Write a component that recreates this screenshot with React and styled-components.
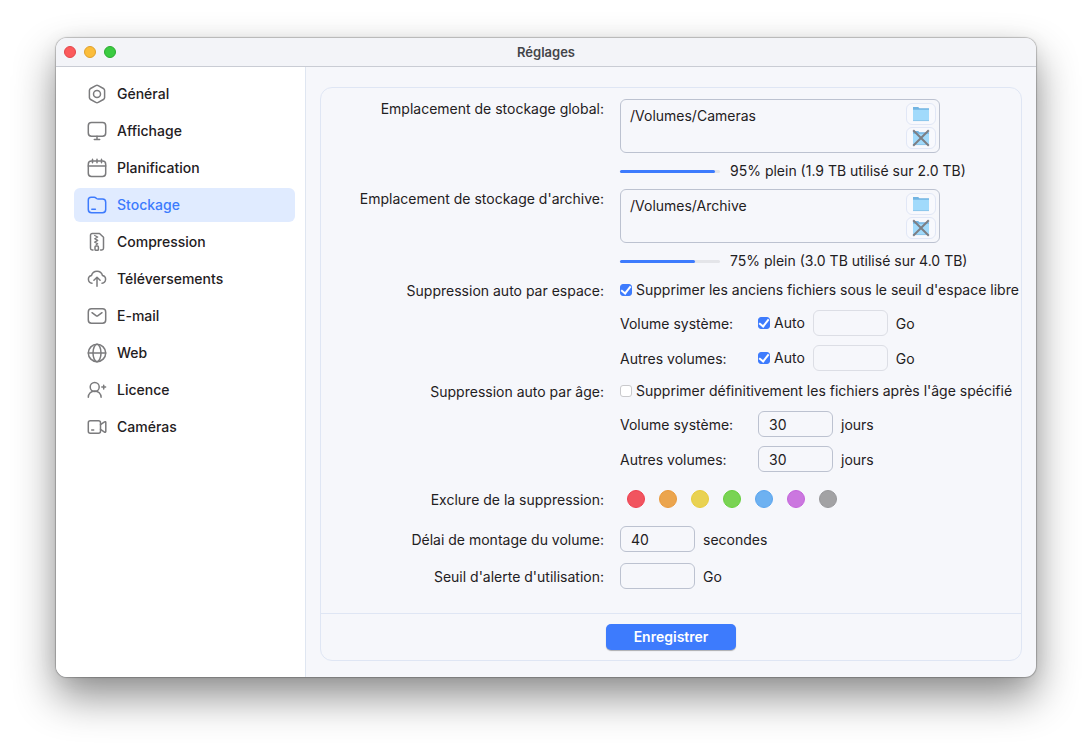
import React, { useState } from 'react';
import styled, { createGlobalStyle } from 'styled-components';

const GlobalStyle = createGlobalStyle`
  * {
    box-sizing: border-box;
  }

  body {
    margin: 0;
    background-color: #ffffff;
    color: #1f2022;
    font-family: Inter, 'Liberation Sans', sans-serif;
    font-size: 14px;
  }

  button, input, textarea {
    margin: 0;
    font: inherit;
    color: inherit;
  }
`;

const Desktop = styled.div`
  display: flex;
  min-height: 100vh;
  padding: 38px 56px 74px;
`;

const Window = styled.div`
  flex: 1;
  display: flex;
  flex-direction: column;
  overflow: hidden;
  border-radius: 11px;
  background-color: #f6f7fb;
  box-shadow: 0 0 1px 1px rgba(0, 0, 0, 0.22), 0 20px 42px rgba(0, 0, 0, 0.44),
    0 2px 20px rgba(0, 0, 0, 0.06);
`;

const TitleBar = styled.header`
  display: grid;
  grid-template-columns: 1fr auto 1fr;
  align-items: center;
  height: 29px;
  padding: 0 8px;
  border-bottom: 1px solid #c9ccd4;
  background-color: #f3f4f8;
`;

const WindowButtons = styled.div`
  display: flex;
  gap: 8px;
`;

const WindowButton = styled.button`
  width: 12px;
  height: 12px;
  padding: 0;
  border: 1px solid ${props => props.$edge};
  border-radius: 50%;
  background-color: ${props => props.$fill};
`;

const Title = styled.h1`
  margin: 0;
  color: #434449;
  font-size: 13px;
  font-weight: 600;
`;

const Body = styled.div`
  flex: 1;
  display: flex;
`;

const Sidebar = styled.nav`
  flex: 0 0 250px;
  display: flex;
  flex-direction: column;
  gap: 3px;
  padding: 10px 10px 10px 18px;
  border-right: 1px solid #dfe6f1;
  background-color: #ffffff;
`;

const NavItem = styled.a`
  display: flex;
  align-items: center;
  gap: 10px;
  height: 34px;
  padding: 0 13px;
  border-radius: 6px;
  color: ${props => (props.$active ? '#3d7bfd' : '#1f2022')};
  background-color: ${props => (props.$active ? '#e0ebff' : 'transparent')};
  font-weight: 500;
  line-height: 20px;
  text-decoration: none;

  svg {
    width: 20px;
    height: 20px;
    color: ${props => (props.$active ? '#3d7bfd' : '#7b7b7d')};
  }
`;

const Content = styled.main`
  flex: 1;
  display: flex;
  padding: 20px 14px 16px;
`;

const Panel = styled.form`
  flex: 1;
  display: flex;
  flex-direction: column;
  border: 1px solid #dfe6f4;
  border-radius: 12px;
`;

const Fields = styled.div`
  flex: 1;
  display: flex;
  flex-direction: column;
  gap: 9px;
  padding: 11px 0 23px;
`;

const FieldName = styled.label`
  line-height: ${props => (props.$tight ? 20 : 24)}px;
  text-align: right;
  white-space: nowrap;
`;

const FieldRow = styled.div`
  display: grid;
  grid-template-columns: 283px 1fr;
  column-gap: 16px;
  align-items: ${props => (props.$centered ? 'center' : 'start')};
  min-height: ${props => props.$height || 28}px;

  > ${FieldName} {
    padding-top: ${props => (props.$centered ? 2 : 0)}px;
  }
`;

const PathBox = styled.div`
  display: flex;
  width: 320px;
  height: 54px;
  padding: 3px;
  border: 1px solid #bcc2d0;
  border-radius: 6px;
`;

const PathText = styled.textarea`
  flex: 1;
  padding: 3px 6px;
  border: none;
  outline: none;
  background: none;
  line-height: 20px;
  resize: none;
`;

const PathButtons = styled.div`
  display: flex;
  flex-direction: column;
  gap: 2px;
`;

const PathButton = styled.button`
  display: flex;
  align-items: center;
  justify-content: center;
  width: 30px;
  height: 22px;
  padding: 0;
  border: 1px solid #e1e7f6;
  border-radius: 6px;
  background-color: #f8f9fd;
`;

const Usage = styled.div`
  display: flex;
  align-items: center;
  gap: 10px;
  margin-top: 9px;
  line-height: 18px;
  white-space: nowrap;
`;

const UsageTrack = styled.div`
  width: 100px;
  height: 3px;
  border-radius: 2px;
  background-color: #e4e5e9;
`;

const UsageFill = styled.div`
  height: 100%;
  border-radius: 2px;
  background-color: #3d7bfd;
`;

const CheckLabel = styled.label`
  display: flex;
  align-items: center;
  gap: 4px;
  line-height: 22px;
  white-space: nowrap;
`;

const CheckBox = styled.input.attrs({ type: 'checkbox' })`
  appearance: none;
  display: grid;
  place-items: center;
  width: 12px;
  height: 12px;
  border: 1px solid #c9c9cc;
  border-radius: 3px;
  background-color: #ffffff;

  &:checked {
    border-color: #3d7bfd;
    background-color: #3d7bfd;
  }

  &:checked::after {
    content: '';
    width: 4px;
    height: 8px;
    margin-top: -2px;
    border: solid #ffffff;
    border-width: 0 2px 2px 0;
    transform: rotate(38deg);
  }
`;

const SubRow = styled.div`
  display: flex;
  align-items: center;
  gap: 8px;
  height: 26px;
  margin-top: 9px;
`;

const SubName = styled.label`
  width: 130px;
`;

const InlineField = styled.div`
  display: flex;
  align-items: center;
  gap: 8px;
`;

const NumberInput = styled.input`
  width: 75px;
  height: 26px;
  padding: 0 10px;
  border: 1px solid #bcc2d0;
  border-radius: 6px;
  outline: none;
  background: none;

  &:disabled {
    border-color: #dcdee5;
  }
`;

const Tags = styled.div`
  display: flex;
  gap: 14px;
  padding-left: 7px;
`;

const Tag = styled.input.attrs({ type: 'checkbox' })`
  appearance: none;
  width: 18px;
  height: 18px;
  border: 1px solid ${props => props.$edge};
  border-radius: 50%;
  background-color: ${props => props.$fill};
`;

const Footer = styled.footer`
  display: flex;
  justify-content: center;
  padding: 10px;
  border-top: 1px solid #dfe6f4;
`;

const SaveButton = styled.button`
  width: 130px;
  height: 26px;
  padding: 0;
  border: none;
  border-radius: 5px;
  background-color: #3d7bfd;
  box-shadow: 0 1px 1px rgba(0, 0, 0, 0.3);
  color: #ffffff;
  font-weight: 600;
  line-height: 20px;
`;

const Icon = ({ children }) => (
  <svg
    viewBox="0 0 20 20"
    fill="none"
    stroke="currentColor"
    strokeWidth="1.5"
    strokeLinecap="round"
    strokeLinejoin="round"
    aria-hidden="true"
  >
    {children}
  </svg>
);

const FolderPicture = ({ crossed }) => (
  <svg width="18" height="18" viewBox="0 0 18 18" aria-hidden="true">
    <path d="M1 2h5.2l1.2 1.3H17V8H1z" fill="#72b4e2" />
    <path d="M1 4.8h16V16H1z" fill="#a1dafb" />
    <path d="M1 15.6h16" stroke="#86c0e6" strokeWidth="0.8" />
    {crossed && <path d="M1.2 1.2l15.6 15.6M16.8 1.2L1.2 16.8" stroke="#7d7f84" strokeWidth="2" />}
  </svg>
);

const navItems = [
  {
    id: 'general',
    label: 'Général',
    icon: (
      <>
        <path d="M8.8 1.6a2.4 2.4 0 0 1 2.4 0l5.2 2.9a2.4 2.4 0 0 1 1.2 2.1v6.8a2.4 2.4 0 0 1-1.2 2.1l-5.2 2.9a2.4 2.4 0 0 1-2.4 0l-5.2-2.9a2.4 2.4 0 0 1-1.2-2.1V6.6a2.4 2.4 0 0 1 1.2-2.1z" />
        <circle cx="10" cy="10" r="3.5" />
      </>
    ),
  },
  {
    id: 'display',
    label: 'Affichage',
    icon: (
      <>
        <rect x="1.3" y="1.5" width="17.4" height="13.7" rx="3.2" />
        <path d="M10 15.2v3M7.3 18.4h5.4" />
      </>
    ),
  },
  {
    id: 'schedule',
    label: 'Planification',
    icon: (
      <>
        <rect x="1.3" y="3" width="17.4" height="15.5" rx="3.2" />
        <path d="M1.3 8h17.4M5.5 1.3v3.4M10 1.3v3.4M14.5 1.3v3.4" />
      </>
    ),
  },
  {
    id: 'storage',
    label: 'Stockage',
    icon: (
      <>
        <path d="M1.3 5a2.8 2.8 0 0 1 2.8-2.8h3.1c.8 0 1.3.3 1.8.8l.5.5c.5.4 1 .6 1.7.6h4.3a3.2 3.2 0 0 1 3.2 3.2v7.2a3.2 3.2 0 0 1-3.2 3.2h-11a3.2 3.2 0 0 1-3.2-3.2z" />
        <path d="M4.8 14.2h3.6" />
      </>
    ),
  },
  {
    id: 'compression',
    label: 'Compression',
    icon: (
      <>
        <path d="M6 18h-.8a1.7 1.7 0 0 1-1.7-1.7V3.2a1.7 1.7 0 0 1 1.7-1.7h7.3l4 3.8v11a1.7 1.7 0 0 1-1.7 1.7h-1.3" />
        <path d="M7.7 3.5l3 1.5-3 1.7 3 1.7-3 1.7 3 1.7-1.5.9" strokeWidth="1.3" />
        <rect x="8" y="14" width="3.4" height="4.3" rx="0.9" />
      </>
    ),
  },
  {
    id: 'uploads',
    label: 'Téléversements',
    icon: (
      <>
        <path d="M5 14.2a3.9 3.9 0 0 1-.5-7.7 5.7 5.7 0 0 1 11 0 3.9 3.9 0 0 1-.5 7.7" />
        <path d="M10 17.3V8.8M6.9 11.3L10 8.2l3.1 3.1" />
      </>
    ),
  },
  {
    id: 'email',
    label: 'E-mail',
    icon: (
      <>
        <rect x="1.3" y="2.7" width="17.4" height="14.6" rx="3.2" />
        <path d="M5 6.7l4 3a1.7 1.7 0 0 0 2 0l4-3" />
      </>
    ),
  },
  {
    id: 'web',
    label: 'Web',
    icon: (
      <>
        <circle cx="10" cy="10" r="8.7" />
        <ellipse cx="10" cy="10" rx="4" ry="8.7" />
        <path d="M1.3 10h17.4" />
      </>
    ),
  },
  {
    id: 'licence',
    label: 'Licence',
    icon: (
      <>
        <circle cx="7.7" cy="7" r="4.5" />
        <path d="M1.3 17.3a6.4 6.4 0 0 1 12.8 0M16.7 5.2v3.8M14.8 7.1h3.8" />
      </>
    ),
  },
  {
    id: 'cameras',
    label: 'Caméras',
    icon: (
      <>
        <rect x="1.3" y="3.7" width="12.2" height="12.6" rx="2" />
        <path d="M13.5 7.7l4-2.8c.6-.5 1.3-.1 1.3.6v9c0 .7-.7 1.1-1.3.6l-4-2.8M4.7 12.9h2" />
      </>
    ),
  },
];

const tags = [
  { name: 'Rouge', fill: '#f1545f', edge: '#ef3f50' },
  { name: 'Orange', fill: '#eba54e', edge: '#ea9a3c' },
  { name: 'Jaune', fill: '#e9d252', edge: '#e8cc3b' },
  { name: 'Vert', fill: '#79d353', edge: '#67cf3d' },
  { name: 'Bleu', fill: '#6db1f1', edge: '#5aa5ef' },
  { name: 'Violet', fill: '#cb77df', edge: '#c564dc' },
  { name: 'Gris', fill: '#a2a2a4', edge: '#98989b' },
];

const StorageField = ({ id, label, path, percent, summary }) => (
  <FieldRow>
    <FieldName htmlFor={id} $tight>{label}</FieldName>
    <div>
      <PathBox>
        <PathText id={id} defaultValue={path} spellCheck={false} />
        <PathButtons>
          <PathButton type="button" aria-label="Choisir un dossier">
            <FolderPicture />
          </PathButton>
          <PathButton type="button" aria-label="Retirer le dossier">
            <FolderPicture crossed />
          </PathButton>
        </PathButtons>
      </PathBox>
      <Usage>
        <UsageTrack>
          <UsageFill style={{ width: `${percent}%` }} />
        </UsageTrack>
        {summary}
      </Usage>
    </div>
  </FieldRow>
);

const SpaceRow = ({ id, label }) => {
  const [auto, setAuto] = useState(true);

  return (
    <SubRow>
      <SubName htmlFor={id}>{label}</SubName>
      <CheckLabel>
        <CheckBox checked={auto} onChange={e => setAuto(e.target.checked)} />
        Auto
      </CheckLabel>
      <NumberInput id={id} disabled={auto} />
      Go
    </SubRow>
  );
};

const AgeRow = ({ id, label }) => (
  <SubRow>
    <SubName htmlFor={id}>{label}</SubName>
    <NumberInput id={id} defaultValue="30" />
    jours
  </SubRow>
);

const App = () => {
  const [section, setSection] = useState('storage');

  return (
    <>
      <GlobalStyle />
      <Desktop>
        <Window>
          <TitleBar>
            <WindowButtons>
              <WindowButton aria-label="Fermer" $fill="#fb5a5c" $edge="#e2464b" />
              <WindowButton aria-label="Réduire" $fill="#fbbd3b" $edge="#dfa02c" />
              <WindowButton aria-label="Agrandir" $fill="#3bcb41" $edge="#2bab30" />
            </WindowButtons>
            <Title>Réglages</Title>
          </TitleBar>
          <Body>
            <Sidebar>
              {navItems.map(item => (
                <NavItem
                  key={item.id}
                  href={`#${item.id}`}
                  $active={item.id === section}
                  onClick={() => setSection(item.id)}
                >
                  <Icon>{item.icon}</Icon>
                  {item.label}
                </NavItem>
              ))}
            </Sidebar>
            <Content>
              <Panel onSubmit={e => e.preventDefault()}>
                <Fields>
                  <StorageField
                    id="global-path"
                    label="Emplacement de stockage global:"
                    path="/Volumes/Cameras"
                    percent={95}
                    summary="95% plein (1.9 TB utilisé sur 2.0 TB)"
                  />
                  <StorageField
                    id="archive-path"
                    label="Emplacement de stockage d'archive:"
                    path="/Volumes/Archive"
                    percent={75}
                    summary="75% plein (3.0 TB utilisé sur 4.0 TB)"
                  />
                  <FieldRow>
                    <FieldName htmlFor="delete-space">Suppression auto par espace:</FieldName>
                    <div>
                      <CheckLabel>
                        <CheckBox id="delete-space" defaultChecked />
                        Supprimer les anciens fichiers sous le seuil d'espace libre
                      </CheckLabel>
                      <SpaceRow id="space-system" label="Volume système:" />
                      <SpaceRow id="space-others" label="Autres volumes:" />
                    </div>
                  </FieldRow>
                  <FieldRow>
                    <FieldName htmlFor="delete-age">Suppression auto par âge:</FieldName>
                    <div>
                      <CheckLabel>
                        <CheckBox id="delete-age" />
                        Supprimer définitivement les fichiers après l'âge spécifié
                      </CheckLabel>
                      <AgeRow id="age-system" label="Volume système:" />
                      <AgeRow id="age-others" label="Autres volumes:" />
                    </div>
                  </FieldRow>
                  <FieldRow $centered $height={35}>
                    <FieldName as="span">Exclure de la suppression:</FieldName>
                    <Tags>
                      {tags.map(tag => (
                        <Tag key={tag.name} aria-label={tag.name} $fill={tag.fill} $edge={tag.edge} />
                      ))}
                    </Tags>
                  </FieldRow>
                  <FieldRow $centered>
                    <FieldName htmlFor="mount-delay">Délai de montage du volume:</FieldName>
                    <InlineField>
                      <NumberInput id="mount-delay" defaultValue="40" />
                      secondes
                    </InlineField>
                  </FieldRow>
                  <FieldRow $centered>
                    <FieldName htmlFor="usage-alert">Seuil d'alerte d'utilisation:</FieldName>
                    <InlineField>
                      <NumberInput id="usage-alert" />
                      Go
                    </InlineField>
                  </FieldRow>
                </Fields>
                <Footer>
                  <SaveButton type="submit">Enregistrer</SaveButton>
                </Footer>
              </Panel>
            </Content>
          </Body>
        </Window>
      </Desktop>
    </>
  );
};

export default App;
